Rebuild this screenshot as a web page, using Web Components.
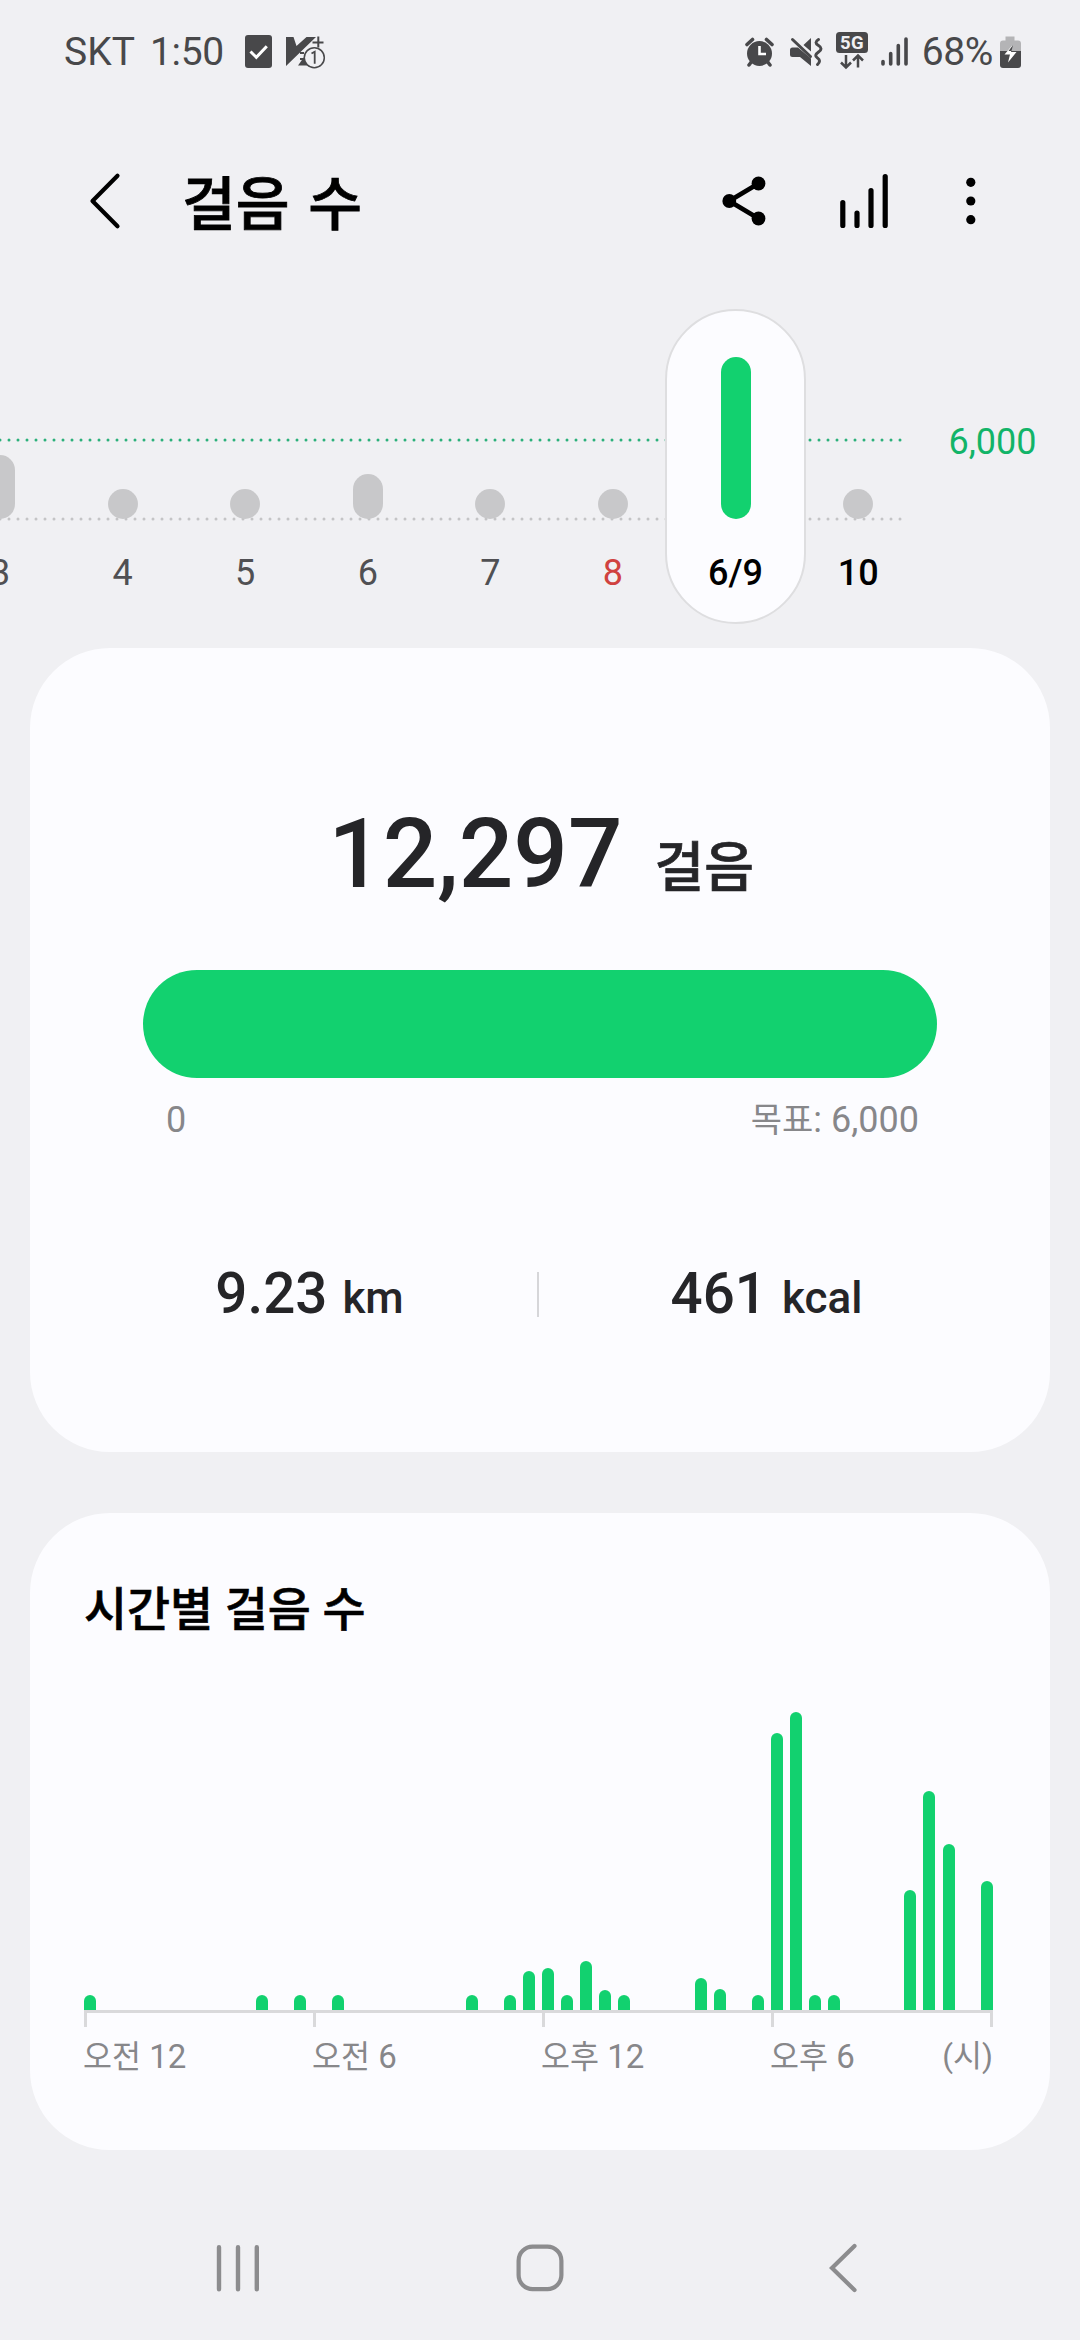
<!DOCTYPE html>
<html lang="ko">
<head>
<meta charset="utf-8">
<title>걸음 수</title>
<style>
  html, body { margin: 0; background: #f0f0f3; }
  body { width: 1080px; height: 2340px; overflow: hidden; font-family: Roboto, "Noto Sans CJK KR", sans-serif; color: #252528; }
</style>
</head>
<body>
<steps-app></steps-app>
<script>
const define = (name, html, setup) => customElements.define(name, class extends HTMLElement {
  connectedCallback() {
    const t = document.createElement('template');
    t.innerHTML = html;
    this.attachShadow({ mode: 'open' }).append(t.content.cloneNode(true));
    if (setup) setup.call(this, this.shadowRoot);
  }
});

define('status-bar', `
  <style>
    :host { display: flex; height: 103px; box-sizing: border-box; padding: 0 58px 0 64px; justify-content: space-between; align-items: center; color: #48484a; font-size: 39px; line-height: 46px; }
    div { display: flex; align-items: center; height: 46px; }
    svg { display: block; flex: none; }
    .time { margin-left: 15px; letter-spacing: -.3px; }
  </style>
  <div>
    <span>SKT</span><span class="time">1:50</span>
    <svg width="84" height="40" viewBox="242 32 84 40" style="margin-left:19px">
      <rect x="244" y="35" width="27" height="33" rx="3" fill="#48484a"/>
      <path d="M249.500 51.500l5.800 5.800 10.500-11" fill="none" stroke="#fff" stroke-width="3"/>
      <path d="M285 37h7.500l3 9 10-9h9.500L285 66z" fill="#48484a"/>
      <path d="M297 65.500l10-14v14z" fill="#48484a"/>
      <path d="M299 53h4M299 59h4" stroke="#48484a" stroke-width="2"/>
      <path d="M317.300 36.500v11M311.500 42.500h11" stroke="#48484a" stroke-width="2"/>
      <circle cx="313.300" cy="57.700" r="10" fill="#f0f0f3" stroke="#48484a" stroke-width="1.500"/>
      <path d="M310.500 53.500l3.200-1.800v12" fill="none" stroke="#48484a" stroke-width="1.800"/>
    </svg>
  </div>
  <div>
    <svg width="170" height="40" viewBox="742 31 170 40" fill="#48484a">
      <circle cx="758.500" cy="52.500" r="12.500"/>
      <path d="M746 43.500l5.500-5M771 43.500l-5.500-5" stroke="#48484a" stroke-width="3.600" stroke-linecap="round"/>
      <path d="M751 60l-3 4M766 60l3 4" stroke="#48484a" stroke-width="3.500" stroke-linecap="round"/>
      <path d="M758.500 45v8h6.500" fill="none" stroke="#fff" stroke-width="2.600"/>
      <path d="M789 49q0-2.500 2.500-2.500H797l13 11v7.500L799 56h-7.500q-2.500 0-2.500-2.500zM810 37v13.500l-7.500-6.500z"/>
      <path d="M791.500 38.500l18 17" stroke="#48484a" stroke-width="3" stroke-linecap="round"/>
      <path d="M817.500 38.500q-5 3 0 6t0 6.500-1 6 0 6.500" fill="none" stroke="#48484a" stroke-width="3" stroke-linecap="round"/>
      <rect x="835" y="31" width="32" height="21" rx="3.500"/>
      <text x="851" y="47.800" font-family="Roboto" font-size="18.500" font-weight="700" text-anchor="middle" fill="#f0f0f3" letter-spacing=".5">5G</text>
      <path d="M845 54v12M840 61.500l5 5 5-5M857 66.500v-12M852 59.500l5-5 5 5" fill="none" stroke="#48484a" stroke-width="2.500"/>
      <path d="M882 60.500v2.500M889.700 52.500v10.500M897.300 44.500V63M905 38v25" stroke="#48484a" stroke-width="3.600" stroke-linecap="round"/>
    </svg>
    <span style="margin-left:9px;letter-spacing:-.4px">68%</span>
    <svg width="23" height="40" viewBox="999 31 23 40" style="margin-left:6px">
      <path d="M1005.500 35.500h9v4h3.500q3 0 3 3V50h-21v-7.500q0-3 3-3h2.500z" fill="#b4b4b6"/>
      <path d="M1000 50h21v14q0 3-3 3h-15q-3 0-3-3z" fill="#48484a"/>
      <path d="M1012.500 44l-8 9.500h5.500l-2 8 8.500-10.500h-5.500z" fill="#fff"/>
      <path d="M1013 44l-4.500 6h3z" fill="#48484a"/>
    </svg>
  </div>
`);

define('title-bar', `
  <style>
    :host { display: flex; height: 196px; align-items: center; color: #000; }
    h1 { margin: 8px 0 0 60px; font-size: 58.500px; font-weight: 500; line-height: 68px; flex: 1; word-spacing: 4px; -webkit-text-stroke: .8px #000; }
    svg { display: block; flex: none; }
    .back { margin-left: 88px; }
  </style>
  <svg class="back" width="34" height="60" viewBox="88 171 34 60"><path d="M117.500 175.800L92.500 201l25 25.300" fill="none" stroke="#000" stroke-width="4.200" stroke-linecap="round" stroke-linejoin="round"/></svg>
  <h1><slot></slot></h1>
  <svg width="360" height="60" viewBox="720 171 360 60">
    <path d="M758.500 183.500L729.300 201l29.200 17.500" fill="none" stroke="#000" stroke-width="4.800"/>
    <circle cx="729.300" cy="201" r="6.900"/><circle cx="758.500" cy="183.500" r="6.900"/><circle cx="758.500" cy="218.500" r="6.900"/>
    <path d="M842.800 202.500v23M857 213v12.500M871 190.500v35M885.200 176.500v49" stroke="#000" stroke-width="5.200" stroke-linecap="round"/>
    <circle cx="970.800" cy="182.300" r="4.600"/><circle cx="970.800" cy="201" r="4.600"/><circle cx="970.800" cy="219.700" r="4.600"/>
  </svg>
`);

define('day-column', `
  <style>
    :host { position: relative; display: flex; flex-direction: column; justify-content: flex-end; align-items: center; flex: 0 0 122.600px; height: 325px; box-sizing: border-box; padding-bottom: 24px; font-size: 36px; line-height: 54px; color: #505053; --bar: #c8c8ca; }
    :host([red]) { color: #d0423f; }
    :host([bold]) { color: #000; font-weight: 500; }
    :host([selected]) { --bar: #12d16f; }
    :host([selected])::before { content: ""; position: absolute; left: -9px; top: 10px; width: 141px; height: 315px; box-sizing: border-box; border: 2px solid #dedee0; border-radius: 71px; background: #fcfcff; }
    i { display: block; position: relative; width: 30px; border-radius: 15px; background: var(--bar); margin-bottom: 27px; }
    span { position: relative; }
  </style>
  <i></i><span><slot></slot></span>
`, function (root) { root.querySelector('i').style.height = this.getAttribute('h') + 'px'; });

define('week-strip', `
  <style>
    :host { position: relative; display: flex; height: 349px; align-items: flex-start; overflow: hidden; }
    svg { position: absolute; left: 0; top: 0; }
    .days { display: flex; margin-left: -61.300px; }
    .goal { margin: 116px 0 0 29px; font-size: 36px; line-height: 54px; color: #12b468; }
  </style>
  <svg width="920" height="349" fill="none" stroke-width="3" stroke-linecap="round" stroke-dasharray="0 9">
    <path d="M0 141H901" stroke="#2bb07a"/><path d="M0 220H901" stroke="#c4c4c6"/>
  </svg>
  <div class="days">
    <day-column h="64">3</day-column><day-column h="30">4</day-column><day-column h="30">5</day-column><day-column h="45">6</day-column><day-column h="30">7</day-column><day-column h="30" red>8</day-column><day-column h="162" bold selected>6/9</day-column><day-column h="30" bold>10</day-column>
  </div>
  <span class="goal">6,000</span>
`);

define('app-card', `
  <style>:host { display: block; margin: 0 30px; border-radius: 80px; background: #fcfcff; box-sizing: border-box; }</style>
  <slot></slot>
`);

define('steps-summary', `
  <style>
    :host { display: block; padding-top: 150px; }
    .count { display: flex; justify-content: center; align-items: baseline; gap: 32px; font-size: 96px; line-height: 112px; font-weight: 500; height: 112px; padding-left: 2px; }
    .count small { font-size: 54px; -webkit-text-stroke: .7px #252528; }
    .bar { margin: 60px 113px 0; height: 108px; border-radius: 54px; background: #12d16f; }
    .range { display: flex; justify-content: space-between; margin: 18px 131px 0 136px; font-size: 36px; line-height: 48px; height: 48px; color: #87878a; }
    .range b { font-weight: 400; font-size: 34px; }
    .stats { display: grid; grid-template-columns: 455px 457px; margin: 116px 0 0 52px; align-items: center; font-weight: 500; }
    .stats div { display: flex; justify-content: center; align-items: baseline; gap: 15px; font-size: 56.500px; line-height: 68px; height: 68px; }
    .stats small { font-size: 44px; }
    .stats p { margin: 0; display: grid; grid-template-columns: 2px 1fr; align-items: center; }
    .stats i { height: 45px; background: #d6d6d9; }
  </style>
  <div class="count"><span>12,297</span><small>걸음</small></div>
  <div class="bar"></div>
  <div class="range"><span>0</span><span><b>목표</b>: 6,000</span></div>
  <div class="stats"><div><span>9.23</span><small>km</small></div><p><i></i><div-holder></div-holder></p></div>
`, function (root) {
  root.querySelector('div-holder').outerHTML = '<div><span>461</span><small>kcal</small></div>';
});

define('hourly-chart', `
  <style>
    :host { display: block; padding: 67px 57px 0 54px; }
    h2 { margin: 0; font-size: 46.800px; font-weight: 500; line-height: 60px; color: #000; -webkit-text-stroke: .6px #000; }
    .plot { display: flex; align-items: flex-end; justify-content: space-between; height: 370px; border-bottom: 3px solid #d9d9db; }
    .plot i { width: 12px; border-radius: 6px 6px 0 0; background: #12d16f; }
    .axis { display: grid; grid-template-columns: 229px 229px 229px 1fr 60px; font-size: 33px; line-height: 44px; color: #87878a; }
    .axis span::before { content: ""; display: block; width: 3px; height: 14px; background: #d9d9db; margin-bottom: 8px; }
    .axis b { font-weight: 400; font-size: 31.500px; margin-left: -1px; }
    .axis span:last-child { text-align: right; font-size: 31.500px; }
    .axis span:last-child::before { margin-left: auto; }
  </style>
  <h2>시간별 걸음 수</h2>
  <div class="plot"></div>
  <div class="axis"><span><b>오전</b> 12</span><span><b>오전</b> 6</span><span><b>오후</b> 12</span><span><b>오후</b> 6</span><span>(시)</span></div>
`, function (root) {
  const half = { 0: 15, 9: 15, 11: 15, 13: 15, 20: 15, 22: 15, 23: 39, 24: 42, 25: 15, 26: 49, 27: 20, 28: 15, 32: 32, 33: 21, 35: 15, 36: 277, 37: 298, 38: 15, 39: 15, 43: 120, 44: 219, 45: 166, 47: 129 };
  root.querySelector('.plot').innerHTML = Array.from({ length: 48 }, (_, n) => `<i style="height:${half[n] || 0}px"></i>`).join('');
});

define('nav-bar', `
  <style>:host { display: flex; justify-content: space-between; padding: 0 221px 0 214px; } svg { display: block; } .home { margin: 0 3.500px 0 -3.500px; }</style>
  <svg width="48" height="56" viewBox="214 2240 48 56" fill="none" stroke="#8c8c8e" stroke-width="4.400" stroke-linecap="round"><path d="M219 2247.300v42M238 2247.300v42M256.800 2247.300v42"/></svg>
  <svg class="home" width="56" height="56" viewBox="512 2240 56 56" fill="none" stroke="#8c8c8e" stroke-width="4.200"><rect x="518.600" y="2246.700" width="42.800" height="42.400" rx="14"/></svg>
  <svg width="34" height="56" viewBox="825 2240 34 56" fill="none" stroke="#8c8c8e" stroke-width="4.200" stroke-linecap="round"><path d="M854.500 2246L832 2268l22.500 22"/></svg>
`);

define('steps-app', `
  <style>
    :host { display: flex; flex-direction: column; height: 2340px; }
    .summary { height: 804px; }
    .hourly { height: 637px; margin-top: 61px; }
    nav-bar { margin-top: 90px; }
  </style>
  <status-bar></status-bar>
  <title-bar>걸음 수</title-bar>
  <week-strip></week-strip>
  <app-card class="summary"><steps-summary></steps-summary></app-card>
  <app-card class="hourly"><hourly-chart></hourly-chart></app-card>
  <nav-bar></nav-bar>
`);
</script>
</body>
</html>
